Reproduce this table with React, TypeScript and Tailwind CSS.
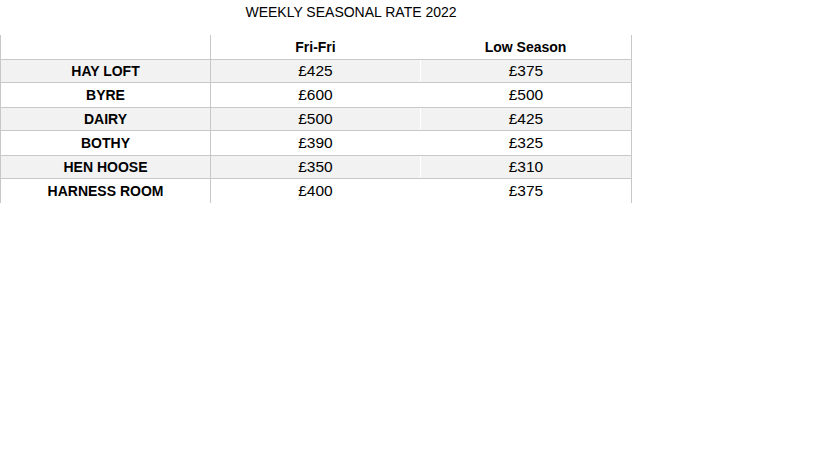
import React from "react";

const rows: [string, string, string][] = [
  ["HAY LOFT", "£425", "£375"],
  ["BYRE", "£600", "£500"],
  ["DAIRY", "£500", "£425"],
  ["BOTHY", "£390", "£325"],
  ["HEN HOOSE", "£350", "£310"],
  ["HARNESS ROOM", "£400", "£375"],
];

export default function App() {
  return (
    <div
      className="w-[819px] h-[460px] bg-white text-black"
      style={{ fontFamily: '"Liberation Sans", Arial, sans-serif' }}
    >
      <div className="w-[702px] h-[35px] pt-[3px] text-center text-[14px] leading-[18px]">
        WEEKLY SEASONAL RATE 2022
      </div>
      <div className="w-[632px] text-[14px] leading-[18px]">
        <div className="flex h-[24px]">
          <div className="w-[211px] border-l border-r border-[#c8c8c8]" />
          <div className="w-[209px] flex items-center justify-center font-bold">Fri-Fri</div>
          <div className="w-[212px] border-r border-[#c8c8c8] flex items-center justify-center font-bold">
            Low Season
          </div>
        </div>
        {rows.map((r, i) => {
          const shaded = i % 2 === 0;
          return (
            <div
              key={r[0]}
              className={
                "flex border-t border-[#c8c8c8] " +
                (shaded ? "h-[23px] bg-[#f2f2f2]" : "h-[25px] bg-white")
              }
            >
              <div className="w-[211px] border-l border-r border-[#c8c8c8] flex items-center justify-center font-bold">
                {r[0]}
              </div>
              <div className="w-[209px] flex items-center justify-center text-[15.5px]">{r[1]}</div>
              <div className="w-[212px] border-l border-r border-l-white border-r-[#c8c8c8] flex items-center justify-center text-[15.5px]">
                {r[2]}
              </div>
            </div>
          );
        })}
      </div>
    </div>
  );
}
